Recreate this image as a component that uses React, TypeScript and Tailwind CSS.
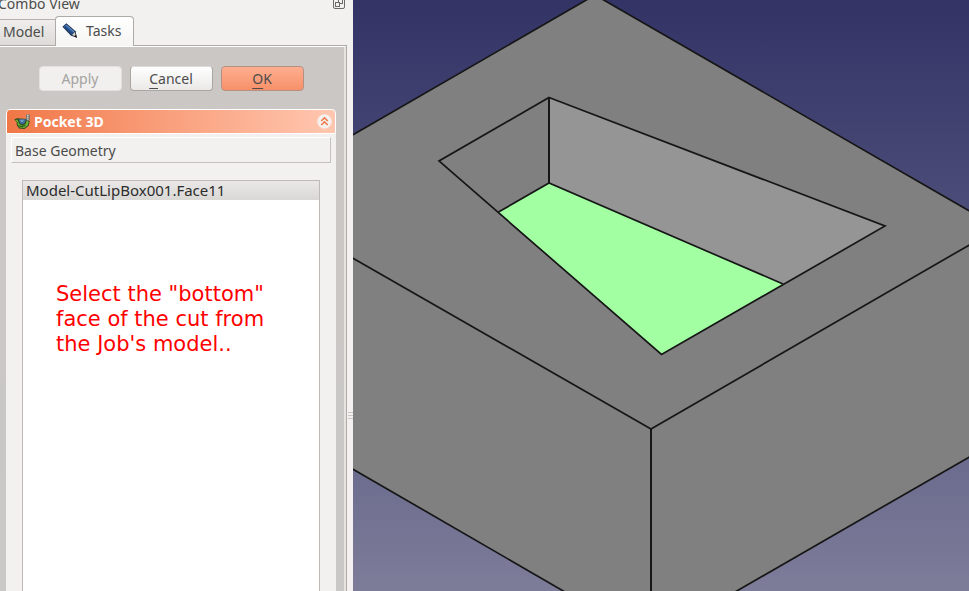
import React from "react";

function FloatIcon() {
  return (
    <svg width="12" height="12" viewBox="0 0 12 12" fill="none" stroke="#6b6a68" aria-hidden="true">
      <rect x="0.5" y="0.5" width="11" height="11" rx="1.5" strokeWidth="1" />
      <rect x="5.5" y="2.5" width="4" height="4" strokeWidth="1" />
      <rect x="2.5" y="5.5" width="4" height="4" fill="#f2f1ef" strokeWidth="1" />
    </svg>
  );
}

function PencilIcon() {
  return (
    <svg width="16" height="16" viewBox="0 0 16 16" aria-hidden="true">
      <path d="M0.4 3.8 L4.4 0.2 L13.6 8.2 L14.8 14.6 L9 12.8 Z" fill="#1d3354" />
      <path d="M1.6 3.6 L4.2 1.4 L12.4 8.6 L9.8 11.6 Z" fill="#3465a4" />
      <path d="M2.3 4.3 L3.4 3.2 L11.4 10.2 L10.4 11.4 Z" fill="#204a87" />
      <path d="M3.8 2 L4.6 1.8 L12.2 8.6 L11.8 9.3 Z" fill="#6d94c6" />
      <path d="M10 12 L12.8 9 L14 13.6 Z" fill="#d8cfc0" />
      <path d="M12.2 13.4 L14 11.6 L15 15 Z" fill="#111" />
    </svg>
  );
}

function PocketIcon() {
  return (
    <svg width="17" height="16" viewBox="0 0 17 16" aria-hidden="true">
      <path d="M0.3 5.6 L3 4.3 L13 5 L15.8 7.3 L14.7 11.7 L10.5 15 L5 14.6 L2.6 10.8 L2.8 8.6 Z" fill="#2c4a18" />
      <path d="M1.2 6.2 L3.4 5.4 L5.2 10 L8.4 11.8 L11.6 10 L13 6.2 L14.8 7.8 L13.8 11.2 L10.2 14 L5.4 13.6 L3.6 10.6 L3.8 8.4 Z" fill="#6fb93a" />
      <path d="M4.6 5.2 H12 L11 8.8 L8.4 10.6 L6 9.2 Z" fill="#3d6d9c" />
      <path d="M6 5.8 H10 L9 8 H7 Z" fill="#6d9cc7" />
      <path d="M4.6 11.6 L8 12.8 L11.4 11.4" stroke="#274a12" fill="none" />
      <path d="M12.2 0.5 H15.8 V5.8 L14 7.6 L12.2 6 Z" fill="#6c6d69" />
      <path d="M13 0.8 H14.6 V5.8 H13 Z" fill="#d3d7cf" />
      <path d="M12.2 2.6 H15.8 M12.2 4.6 H15.8" stroke="#777a74" strokeWidth="0.7" />
    </svg>
  );
}

function CollapseIcon() {
  return (
    <svg className="block" width="15" height="15" viewBox="0 0 15 15" aria-hidden="true">
      <circle cx="7.5" cy="7.5" r="7.2" fill="#f4f1ef" />
      <path d="M4.3 7 L7.5 3.8 L10.7 7 M4.3 11 L7.5 7.8 L10.7 11" fill="none" stroke="#f07746" strokeWidth="1.6" />
    </svg>
  );
}

function Viewport() {
  return (
    <main className="min-w-0 flex-1 bg-linear-to-b from-[#333366] to-[#7d7c99]">
      <svg
        className="block h-full w-full"
        viewBox="0 0 616 591"
        preserveAspectRatio="xMidYMid slice"
        role="img"
        aria-label="3D view of the model with the pocket floor selected"
      >
        <path d="M0 135 L242 -5 L616 211 V457 L383 591 H212 L0 469 Z" fill="#808080" />
        <path d="M196 97 L532 226 L430 284 L196 183 Z" fill="#959595" />
        <path d="M196 183 L430 284 L308.5 354.5 L145.5 212 Z" fill="#a2ffa2" />
        <g fill="none" stroke="#161616" strokeWidth="1.7">
          <path d="M-2 136 L242 -5 L618 212" />
          <path d="M196 97.5 L532 226 L308.5 354.5 L86 161 Z" />
          <path d="M145.5 212 L196 183 L430 284" />
          <path d="M-2 257 L298 429 L618 244" />
          <path d="M-2 468 L212 592" />
          <path d="M382 592 L618 456" />
        </g>
        <path d="M196 97 V183 M298 429 V591" stroke="#161616" strokeWidth="2" />
      </svg>
    </main>
  );
}

const buttonBase = "h-[25px] w-[83px] rounded-[4px] border text-[14px] leading-[20px]";

export default function App() {
  return (
    <div className="flex h-screen overflow-hidden bg-[#f2f1ef] font-['Noto_Sans','Open_Sans',sans-serif] text-[14px] text-[#4c4c4c]">
      <aside className="flex w-[353px] shrink-0">
        <div className="flex min-w-0 flex-1 flex-col">
          <header className="flex h-4 shrink-0 items-start justify-between">
            <h1 className="-mt-1.5 -ml-0.5 leading-5">Combo View</h1>
            <button type="button" aria-label="Float panel" className="-mt-[3px] mr-0.5">
              <FloatIcon />
            </button>
          </header>

          <div role="tablist" className="z-10 -mb-px flex h-[30px] shrink-0 items-end">
            <button
              type="button"
              role="tab"
              aria-selected="false"
              className="mb-px h-[26px] w-[55px] border-t border-[#b5b2ae] bg-linear-to-b from-[#efeeec] to-[#dddbd8] pb-0.5 pl-[3px] text-left"
            >
              Model
            </button>
            <button
              type="button"
              role="tab"
              aria-selected="true"
              className="flex h-[30px] w-[79px] items-center gap-2 rounded-t-[4px] border border-b-0 border-[#aeaba7] bg-linear-to-b from-white to-[#f6f5f4] pb-0.5 pl-1.5"
            >
              <PencilIcon />
              Tasks
            </button>
          </div>

          <section className="flex min-h-0 flex-1 flex-col border-t border-r border-[#aeaba7]">
            <div className="flex min-h-0 flex-1 flex-col border-t border-r-2 border-t-white border-r-[#e6e4e1] bg-linear-to-b from-[#cbc7c4] to-[#c9c8c6] pt-[19px]">
              <div className="mr-0.5 flex justify-center gap-2">
                <button
                  type="button"
                  disabled
                  className={buttonBase + " border-[#e3e0dd] bg-[#f1f0ee] text-[#a5a3a1]"}
                >
                  Apply
                </button>
                <button
                  type="button"
                  className={buttonBase + " border-[#aaa7a3] border-t-[#dedbd8] bg-linear-to-b from-white to-[#eae9e7]"}
                >
                  <span className="underline underline-offset-4">C</span>ancel
                </button>
                <button
                  type="button"
                  className={buttonBase + " border-[#b59080] bg-linear-to-b from-[#ffae90] to-[#f69069]"}
                >
                  <span className="underline underline-offset-4">O</span>K
                </button>
              </div>

              <div className="mt-[18px] mr-2 ml-1.5 flex min-h-0 flex-1 flex-col">
                <div className="flex h-[25px] shrink-0 items-center rounded-t-[4px] border border-white bg-linear-to-r from-[#f07746] to-[#ffc7b0] pr-[3px] pl-[7px]">
                  <PocketIcon />
                  <h2 className="ml-[3px] flex-1 font-bold text-white">Pocket 3D</h2>
                  <button type="button" aria-label="Collapse">
                    <CollapseIcon />
                  </button>
                </div>

                <div className="flex min-h-0 flex-1 flex-col bg-[#f2f1ef] px-[5px] pt-[3px]">
                  <button
                    type="button"
                    className="h-[26px] shrink-0 border border-t-white border-r-[#c4c1bd] border-b-[#c4c1bd] border-l-white pl-[3px] text-left"
                  >
                    Base Geometry
                  </button>
                  <div className="mx-[11px] mt-[17px] min-h-0 flex-1 border border-b-0 border-[#bfbab5] bg-white">
                    <ul role="listbox" aria-label="Base Geometry">
                      <li
                        role="option"
                        aria-selected="true"
                        className="h-[19px] bg-linear-to-b from-[#e9e8e7] to-[#d9d8d5] pl-[3px] text-[15px] leading-[19px] text-[#2c2c2c]"
                      >
                        Model-CutLipBox001.Face11
                      </li>
                    </ul>
                    <p className="mt-[82px] mr-10 ml-[33px] font-['DejaVu_Sans',sans-serif] text-[21px] leading-[25px] text-[#ff0000]">
                      Select the "bottom" face of the cut from the Job's model..
                    </p>
                  </div>
                </div>
              </div>
            </div>
          </section>
        </div>
        <div role="separator" aria-orientation="vertical" className="flex w-1.5 flex-col justify-center">
          <div className="mt-[240px] ml-px flex flex-col gap-0.5">
            <span className="h-px bg-[#c9c7c4]" />
            <span className="h-px bg-[#c9c7c4]" />
            <span className="h-px bg-[#c9c7c4]" />
          </div>
        </div>
      </aside>
      <Viewport />
    </div>
  );
}
